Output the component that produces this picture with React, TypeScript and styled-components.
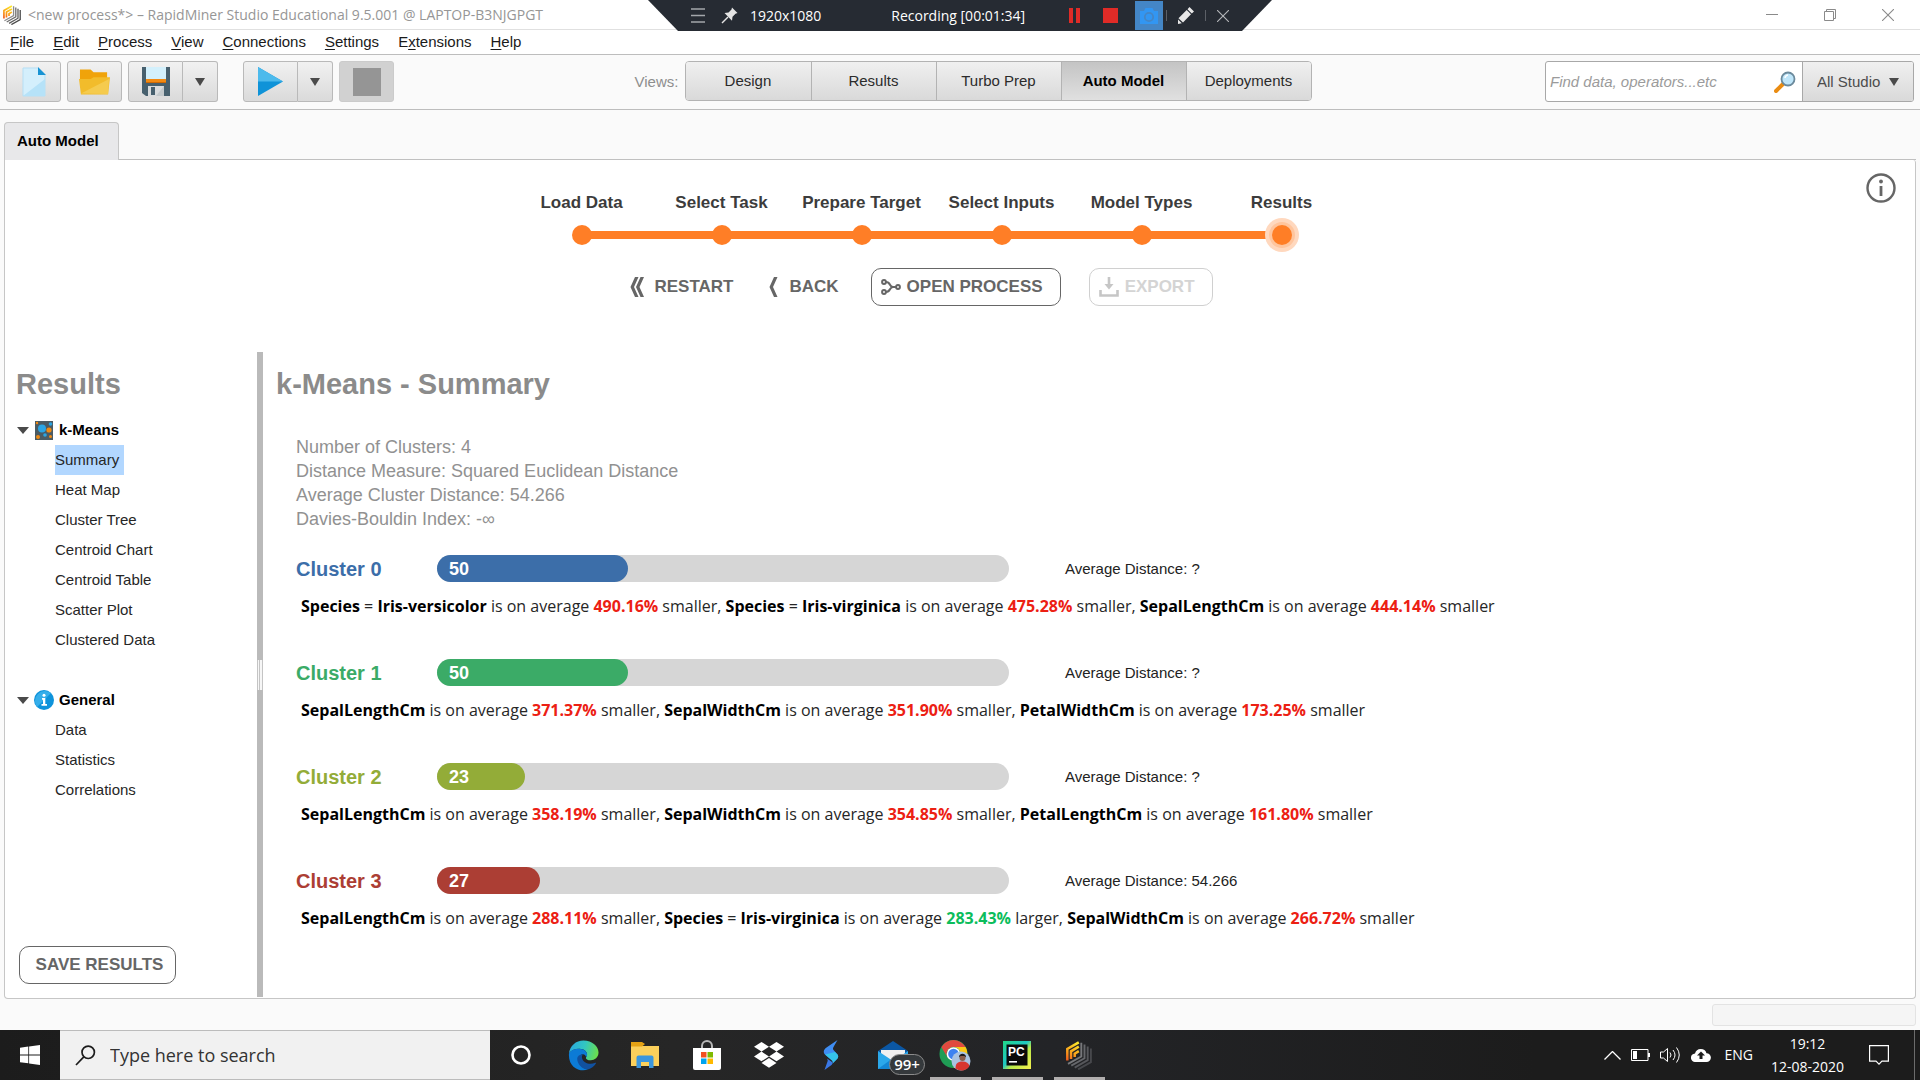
import React from "react";
import styled, { createGlobalStyle } from "styled-components";

const ARIAL = `"Liberation Sans", Arial, sans-serif`;
const SYSTEM = `"Open Sans", "Segoe UI", sans-serif`;

const GlobalStyle = createGlobalStyle`
  *, *::before, *::after { box-sizing: border-box; }
  body { margin: 0; background: #fafafa; }
  button, input, select { font: inherit; color: inherit; margin: 0; }
  h1, h2, h3, p, ul, dl, dd { margin: 0; padding: 0; }
  ul { list-style: none; }
  svg { display: block; flex: none; }
`;

const Page = styled.div`
  min-height: 100vh;
  display: flex;
  flex-direction: column;
  font-family: ${ARIAL};
  font-size: 15px;
  color: #222;
`;

/* ---------- window title ---------- */

const TitleBar = styled.header`
  position: relative;
  height: 30px;
  flex: none;
  display: flex;
  align-items: center;
  gap: 7px;
  padding-left: 3px;
  background: #fff;
  border-bottom: 1px solid #e0e0e0;
`;

const WindowTitle = styled.h1`
  flex: 1;
  font: 400 14px/20px ${SYSTEM};
  color: #969696;
  white-space: nowrap;
`;

const PlainButton = styled.button`
  display: flex;
  align-items: center;
  justify-content: center;
  padding: 0;
  border: 0;
  background: none;
`;

const WindowButton = styled(PlainButton)`
  width: 58px;
  height: 28px;
`;

const WindowButtons = styled.div`
  display: flex;
  padding-right: 3px;
`;

const Recorder = styled.div`
  position: absolute;
  top: 0;
  left: 50%;
  width: 624px;
  height: 31px;
  margin-left: -312px;
  padding: 0 43px;
  display: flex;
  align-items: center;
  background: #262b33;
  clip-path: polygon(0 0, 100% 0, 594px 100%, 30px 100%);
  font: 400 14px/20px ${SYSTEM};
  color: #fff;
`;

const RecorderSize = styled.span`
  margin-left: 12px;
`;

const RecorderTime = styled.span`
  flex: 1;
  padding-left: 26px;
  text-align: center;
`;

const RecorderTools = styled.div`
  display: flex;
  align-items: center;
  gap: 23px;
`;

const RecorderIcons = styled.div`
  display: flex;
  align-items: center;
  gap: 16px;
`;

const RecorderEnd = styled.div`
  display: flex;
  align-items: center;
  gap: 11px;
  margin-left: -20px;
`;

const CameraButton = styled(PlainButton)`
  width: 28px;
  height: 29px;
  margin-left: -6px;
  background: #4486c6;
`;

const Separator = styled.span`
  width: 1px;
  height: 11px;
  background: #5c6067;
`;

/* ---------- menu ---------- */

const MenuBar = styled.nav`
  height: 25px;
  flex: none;
  display: flex;
  align-items: center;
  gap: 19px;
  padding-left: 10px;
  background: #fff;
  border-bottom: 1px solid #bdbdbd;
`;

const MenuItem = styled(PlainButton)`
  display: block;
  line-height: 20px;
  color: #1a1a1a;
  u { text-underline-offset: 2px; }
`;

/* ---------- toolbar ---------- */

const Toolbar = styled.div`
  height: 55px;
  flex: none;
  display: flex;
  align-items: flex-start;
  justify-content: space-between;
  padding: 6px 6px 0;
  background: #fafafa;
  border-bottom: 1px solid #bdbdbd;
`;

const ToolGroup = styled.div`
  display: flex;
  gap: 6px;
`;

const SplitButton = styled.div`
  display: flex;
  & + & { margin-left: 19px; }
`;

const ToolButton = styled.button<{ $narrow?: boolean; $join?: "left" | "right" }>`
  width: ${(p) => (p.$narrow ? 35 : 55)}px;
  height: 41px;
  padding: 0;
  display: flex;
  align-items: center;
  justify-content: center;
  border: 1px solid #b9b9b9;
  border-left-width: ${(p) => (p.$join === "right" ? 0 : 1)}px;
  border-radius: ${(p) =>
    p.$join === "left" ? "3px 0 0 3px" : p.$join === "right" ? "0 3px 3px 0" : "3px"};
  background: linear-gradient(#f1f1f1, #dadada);
  &:disabled { background: #d1d1d1; border-color: #cbcbcb; }
`;

const Views = styled.div`
  display: flex;
  align-items: center;
  padding-left: 8px;
  gap: 7px;
  color: #8e8e8e;
`;

const ViewTabs = styled.div`
  display: flex;
  border: 1px solid #b3b3b3;
  border-radius: 4px;
  overflow: hidden;
`;

const ViewTab = styled.button<{ $active?: boolean }>`
  width: 125px;
  height: 38px;
  padding: 0 2px 2px 0;
  border: 0;
  border-left: 1px solid #b3b3b3;
  background: ${(p) =>
    p.$active ? "linear-gradient(#c4c4c4, #e0e0e0)" : "linear-gradient(#f0f0f0, #d9d9d9)"};
  font-weight: ${(p) => (p.$active ? 700 : 400)};
  color: ${(p) => (p.$active ? "#000" : "#2b2b2b")};
  &:first-child { border-left: 0; }
`;

const SearchBox = styled.div`
  display: flex;
  height: 41px;
  width: 369px;
  border: 1px solid #a8a8a8;
  border-radius: 3px;
  background: #fff;
  overflow: hidden;
`;

const SearchLabel = styled.label`
  flex: 1;
  min-width: 0;
  display: flex;
  align-items: center;
  padding: 0 6px 0 4px;
`;

const SearchInput = styled.input`
  flex: 1;
  min-width: 0;
  border: 0;
  padding: 0;
  background: none;
  outline: none;
  &::placeholder { color: #9b9b9b; font-style: italic; opacity: 1; }
`;

const ScopeBox = styled.div`
  width: 111px;
  display: flex;
  align-items: center;
  padding: 0 14px;
  border-left: 1px solid #a8a8a8;
  background: linear-gradient(#f0f0f0, #d9d9d9);
`;

const ScopeSelect = styled.select`
  flex: 1;
  min-width: 0;
  appearance: none;
  border: 0;
  padding: 0;
  background: none;
  color: #4c4c4c;
`;

/* ---------- auto model panel ---------- */

const TabStrip = styled.div`
  display: flex;
  flex: none;
  padding: 12px 4px 0;
`;

const PanelTab = styled.button`
  width: 115px;
  height: 38px;
  padding: 0 12px 2px;
  text-align: left;
  font-weight: 700;
  color: #000;
  border: 1px solid #c6c6c6;
  border-bottom: 0;
  border-radius: 4px 4px 0 0;
  background: #e8e8ea;
`;

const TabRest = styled.div`
  flex: 1;
  border-bottom: 1px solid #c0c0c0;
`;

const Panel = styled.main`
  flex: 1;
  display: flex;
  flex-direction: column;
  margin: 0 4px;
  background: #fff;
  border: 1px solid #c6c6c6;
  border-top: 0;
  border-radius: 0 3px 4px 4px;
`;

const PanelHead = styled.div`
  display: flex;
  height: 192px;
  flex: none;
`;

const Wizard = styled.div`
  flex: 1;
  display: flex;
  flex-direction: column;
  align-items: center;
  padding-top: 33px;
`;

const InfoButton = styled(PlainButton)`
  width: 30px;
  height: 30px;
  margin: 13px 19px 0 8px;
`;

const Steps = styled.ol`
  display: flex;
  margin: 0;
  padding: 0;
  list-style: none;
`;

const Step = styled.li`
  width: 140px;
  text-align: center;
  font: 700 17px/20px ${ARIAL};
  color: #3c3c3c;
`;

const Track = styled.div`
  height: 34px;
  margin-top: 5px;
  display: flex;
  align-items: center;
`;

const Segment = styled.span<{ $hidden?: boolean }>`
  flex: 1;
  height: 8px;
  background: ${(p) => (p.$hidden ? "transparent" : "#ff7e26")};
`;

const Dot = styled.span<{ $current?: boolean }>`
  width: 20px;
  height: 20px;
  margin: 0 -1px;
  border-radius: 50%;
  background: #ff7e26;
  box-shadow: ${(p) => (p.$current ? "0 0 0 3px #ffc59d, 0 0 0 7px #ffd8be" : "none")};
`;

const Actions = styled.div`
  display: flex;
  gap: 28px;
  margin-top: 16px;
  padding-right: 24px;
`;

const Action = styled.button<{ $outline?: boolean }>`
  height: 38px;
  display: flex;
  align-items: center;
  gap: ${(p) => (p.$outline ? 6 : 9)}px;
  padding: ${(p) => (p.$outline ? "0 17px 0 9px" : "0 4px")};
  border: ${(p) => (p.$outline ? "1px solid #666" : "0")};
  border-radius: 10px;
  background: none;
  font-weight: 700;
  font-size: 17px;
  color: #666;
  &:disabled { color: #d4d4d4; border-color: #d0d0d0; }
`;

const Workspace = styled.div`
  flex: 1;
  display: flex;
`;

const Sidebar = styled.aside`
  width: 252px;
  flex: none;
  display: flex;
  flex-direction: column;
  padding: 14px 0 14px 11px;
`;

const Heading = styled.h2`
  font: 700 29px/36px ${ARIAL};
  color: #8b8b8b;
`;

const Tree = styled.div`
  flex: 1;
  margin-top: 13px;
`;

const TreeGroup = styled.section`
  margin-bottom: 30px;
`;

const TreeHead = styled.h3`
  height: 30px;
  display: flex;
  align-items: center;
  gap: 5px;
  padding-left: 1px;
  font: 700 15px/30px ${ARIAL};
  color: #000;
`;

const TreeLink = styled.a<{ $selected?: boolean }>`
  display: table;
  margin-left: 39px;
  padding-right: 5px;
  line-height: 30px;
  text-decoration: none;
  color: #262626;
  background: ${(p) => (p.$selected ? "#b2d7ff" : "none")};
`;

const SaveButton = styled(Action)`
  align-self: flex-start;
  width: 157px;
  margin-left: 3px;
  padding: 0 0 0 4px;
  justify-content: center;
`;

const Splitter = styled.div`
  width: 6px;
  flex: none;
  display: flex;
  align-items: center;
  margin-bottom: 1px;
  background: #bababa;
`;

const Grip = styled.span`
  width: 6px;
  height: 30px;
  background: linear-gradient(90deg, #c4c4c4 1px, #f6f6f6 1px 2px, #c4c4c4 2px 3px, #f6f6f6 3px 5px, #c4c4c4 5px);
`;

const Content = styled.section`
  flex: 1;
  min-width: 0;
  padding: 14px 13px 0;
`;

const Facts = styled.ul`
  margin: 33px 20px 23px;
  font-size: 18px;
  line-height: 24px;
  color: #919191;
`;

const Cluster = styled.article`
  margin: 0 20px 41px;
`;

const ClusterRow = styled.div`
  height: 27px;
  display: grid;
  grid-template-columns: 141px 572px 1fr;
  align-items: center;
`;

const ClusterName = styled.h3<{ $color: string }>`
  padding-top: 2px;
  font: 700 20px/27px ${ARIAL};
  color: ${(p) => p.$color};
`;

const Meter = styled.div`
  height: 27px;
  border-radius: 14px;
  background: #d6d6d6;
`;

const MeterFill = styled.div<{ $color: string }>`
  height: 27px;
  padding: 1px 0 0 12px;
  border-radius: 14px;
  background: ${(p) => p.$color};
  font: 700 18px/27px ${ARIAL};
  color: #fff;
`;

const Distance = styled.span`
  margin-left: 56px;
`;

const Description = styled.p`
  margin: 14px 0 0 5px;
  font: 400 16px/22px "Open Sans", sans-serif;
  color: #262626;
  white-space: nowrap;
  b { color: #000; }
`;

const Percent = styled.strong<{ $up?: boolean }>`
  color: ${(p) => (p.$up ? "#0cbd5c" : "#ec2013")};
`;

const StatusBar = styled.footer`
  height: 31px;
  flex: none;
  display: flex;
  justify-content: flex-end;
  padding: 5px 4px 4px;
`;

const ProgressBox = styled.div`
  width: 204px;
  border: 1px solid #e3e3e3;
  border-radius: 3px;
  background: #f5f5f5;
`;

/* ---------- system task bar ---------- */

const TaskBar = styled.footer`
  height: 50px;
  flex: none;
  display: flex;
  background: linear-gradient(90deg, #1c1c1c, #262626 35%, #232427 55%, #1c1c1c 80%);
  font: 400 14px/20px ${SYSTEM};
  color: #fff;
`;

const StartButton = styled(PlainButton)`
  width: 60px;
`;

const TaskSearch = styled.label`
  width: 430px;
  display: flex;
  align-items: center;
  gap: 14px;
  padding-left: 15px;
  background: #f1f1f1;
  border: solid #bcbcbc;
  border-width: 1px 0;
`;

const TaskInput = styled.input`
  flex: 1;
  min-width: 0;
  border: 0;
  padding: 0;
  outline: none;
  background: none;
  font-size: 18px;
  line-height: 24px;
  &::placeholder { color: #333; opacity: 1; }
`;

const Apps = styled.div`
  flex: 1;
  display: flex;
`;

const AppButton = styled(PlainButton)<{ $open?: boolean }>`
  position: relative;
  width: 62px;
  height: 50px;
  background: ${(p) =>
    p.$open ? "linear-gradient(#b1aeae, #b1aeae) center bottom / 51px 3px no-repeat" : "none"};
`;

const Badge = styled.span`
  position: absolute;
  left: 27px;
  top: 24px;
  width: 36px;
  height: 21px;
  border: 1px solid #8c8c8c;
  border-radius: 11px;
  background: #35393c;
  font-size: 15px;
  font-weight: 600;
  line-height: 19px;
  text-align: center;
  color: #fff;
`;

const Tray = styled.div`
  display: flex;
  align-items: center;
`;

const TrayIcons = styled.div`
  display: flex;
  align-items: center;
  gap: 10px;
`;

const Language = styled(PlainButton)`
  margin: 0 16px 0 14px;
`;

const Clock = styled.div`
  width: 77px;
  display: flex;
  flex-direction: column;
  gap: 3px;
  text-align: center;
`;

const NoticeButton = styled(PlainButton)`
  margin: 0 25px 0 23px;
`;

const DesktopEdge = styled.span`
  width: 1px;
  height: 50px;
  margin-right: 5px;
  background: #6b6b6b;
`;

/* ---------- drawings ---------- */

const Caret = ({ w = 10, h = 8, fill = "#4a4a4a" }: { w?: number; h?: number; fill?: string }) => (
  <svg width={w} height={h} viewBox="0 0 10 8" preserveAspectRatio="none">
    <path d="M0 0h10L5 8z" fill={fill} />
  </svg>
);

const RapidLogo = ({ size, dark }: { size: number; dark?: boolean }) => {
  const greys = dark ? ["#77787b", "#66676b", "#56575b", "#47484c"] : ["#8c8c8c", "#6f6f6f", "#5c5c5c", "#4a4a4a"];
  const warm = dark ? "logoWarmDark" : "logoWarm";
  return (
    <svg width={size} height={Math.round(size * 1.12)} viewBox="0 0 26 29" fill="none">
      <defs>
        <linearGradient id={warm} gradientUnits="userSpaceOnUse" x1="2" y1="21" x2="12" y2="2">
          <stop offset="0" stopColor="#f0541e" />
          <stop offset="0.450" stopColor="#f9a01b" />
          <stop offset="1" stopColor="#fde92b" />
        </linearGradient>
      </defs>
      <g stroke={`url(#${warm})`} strokeWidth="2.500">
        <path d="M1.300 19.500V8L12.800 1.300" />
        <path d="M5 18V10.300l7.800-4.600" />
        <path d="M8.700 16v-3.400l4.100-2.400" />
      </g>
      <g strokeWidth="1.900">
        <path d="M15.300 1.800V15.500L2 22.800" stroke={greys[0]} />
        <path d="M18.500 3.600V17.300L5.300 24.700" stroke={greys[1]} />
        <path d="M21.700 5.500V19.200L8.700 26.600" stroke={greys[2]} />
        <path d="M24.900 7.400V21.100L12.100 28.400" stroke={greys[3]} />
      </g>
    </svg>
  );
};

const NewIcon = () => (
  <svg width="24" height="30" viewBox="0 0 24 30">
    <path d="M1 1h15l7 7v21H1z" fill="#d4effc" stroke="#b5dff5" />
    <path d="M1 29L23 12v17z" fill="#b6e2f8" />
    <path d="M16 0l8 8h-8z" fill="#1893d3" />
  </svg>
);

const OpenIcon = () => (
  <svg width="31" height="27" viewBox="0 0 32 27">
    <path d="M1 1h11l3 3h14v8H1z" fill="#f0a30a" />
    <path d="M0 11l12 0 3-2h17l-2 18H2z" fill="#f2bc2b" />
    <path d="M2 26L31 11l-1 15.500z" fill="#f5cb4e" />
  </svg>
);

const SaveIcon = () => (
  <svg width="28" height="29" viewBox="0 0 28 29">
    <path d="M0 0h28v29H4l-4-3z" fill="#47606e" />
    <path d="M4 0h20v12H4z" fill="#d3f0fc" />
    <path d="M4 12h20v3H4z" fill="#f28a12" />
    <path d="M4 15h20v1H4z" fill="#cf6a05" />
    <path d="M6 19h16v10H6z" fill="#d9dcde" />
    <path d="M9 20h4v8H9z" fill="#47606e" />
    <path d="M22 19v10h-8z" fill="#c3c9cc" />
  </svg>
);

const PlayIcon = () => (
  <svg width="25" height="29" viewBox="0 0 25 29">
    <path d="M0 0l25 14.500L0 29z" fill="#0f93d8" />
    <path d="M0 0l25 14.500H0z" fill="#4cbaec" />
  </svg>
);

const MagnifierIcon = () => (
  <svg width="22" height="22" viewBox="0 0 22 22">
    <path d="M9 13l-7 7" stroke="#ea8c12" strokeWidth="4" strokeLinecap="round" />
    <circle cx="14" cy="8" r="6.500" fill="#bfe6fa" stroke="#6b8a9c" strokeWidth="1.800" />
    <path d="M11 7a3.500 3.500 0 0 1 3-3" stroke="#fff" strokeWidth="1.500" fill="none" />
  </svg>
);

const InfoIcon = () => (
  <svg width="30" height="30" viewBox="0 0 30 30" fill="none">
    <circle cx="15" cy="15" r="13.500" stroke="#666" strokeWidth="2.400" />
    <path d="M15 13v10" stroke="#666" strokeWidth="2.800" />
    <circle cx="15" cy="8.500" r="1.900" fill="#666" />
  </svg>
);

const ChevronPath = "M7 0h3.500L6 10l4.500 10H7L2.500 10z";
const RestartIcon = () => (
  <svg width="15" height="20" viewBox="2 0 15 20" fill="#666">
    <path d={ChevronPath} />
    <path d={ChevronPath} transform="translate(5.500 0)" />
  </svg>
);
const BackIcon = () => (
  <svg width="11" height="20" viewBox="2 0 11 20" fill="#666">
    <path d={ChevronPath} />
  </svg>
);

const ProcessIcon = () => (
  <svg width="20" height="16" viewBox="0 0 20 16" fill="none" stroke="#666" strokeWidth="2">
    <circle cx="3" cy="3" r="1.900" />
    <circle cx="3" cy="13" r="1.900" />
    <circle cx="17" cy="8" r="1.900" />
    <path d="M5 3c5 0 3 5 7 5h3M5 13c5 0 3-5 7-5" />
  </svg>
);

const ExportIcon = () => (
  <svg width="20" height="20" viewBox="0 0 20 20" fill="none" stroke="#c6c6c6" strokeWidth="2.600">
    <path d="M1.500 13v5.500h17V13" />
    <path d="M10 0v9" />
    <path d="M5.500 7h9L10 12.500z" fill="#c6c6c6" stroke="none" />
  </svg>
);

const KMeansIcon = () => (
  <svg width="20" height="19" viewBox="-1 0 20 19">
    <path d="M0 0h18v19H0z" fill="#4b5b63" />
    <circle cx="7" cy="7.500" r="4" fill="#2ba5e4" />
    <circle cx="14" cy="9" r="2.600" fill="#f08b13" />
    <circle cx="10" cy="14" r="1.800" fill="#2ba5e4" />
    <circle cx="3" cy="16" r="2" fill="#f08b13" />
    <circle cx="15.500" cy="3" r="1.800" fill="#2ba5e4" />
    <circle cx="2" cy="2" r="1.200" fill="#f08b13" />
    <circle cx="15.500" cy="15.500" r="1.500" fill="#f08b13" />
  </svg>
);

const GeneralIcon = () => (
  <svg width="20" height="20" viewBox="0 0 20 20">
    <circle cx="10" cy="10" r="10" fill="#0e93db" />
    <path d="M3 17A10 10 0 0 1 17 3z" fill="#35aeea" />
    <path d="M8 8h3.300v6H13v1.700H7.500V14H9V9.700H8z" fill="#fff" />
    <circle cx="10" cy="5.300" r="1.500" fill="#fff" />
  </svg>
);

const WindowsIcon = () => (
  <svg width="20" height="20" viewBox="0 0 20 20" fill="#fff">
    <path d="M0 2.800l8.300-1.200v7.900H0zM9.100 1.500L20 0v9.500H9.100zM0 10.400h8.300v7.900L0 17.200zM9.100 10.400H20V20L9.100 18.500z" />
  </svg>
);

const TaskSearchIcon = () => (
  <svg width="21" height="21" viewBox="0 0 21 21" fill="none" stroke="#1c1c1c" strokeWidth="1.700">
    <circle cx="13.200" cy="7.300" r="6.200" />
    <path d="M8.800 11.900L1 20" />
  </svg>
);

const EdgeIcon = () => (
  <svg width="31" height="31" viewBox="0 0 32 32">
    <defs>
      <linearGradient id="edgeTop" x1="0" y1="0.300" x2="1" y2="0.500">
        <stop offset="0" stopColor="#29a8e0" />
        <stop offset="0.500" stopColor="#32c6c2" />
        <stop offset="1" stopColor="#6be04c" />
      </linearGradient>
    </defs>
    <path d="M1 14C2 6 8 .500 16 .500c9 0 15.500 6 15.500 12.500 0 5-4 8-8 8-3.500 0-5-1.500-5-2.500 0-.800 1.200-1.200 1.200-3.500 0-3-3-6-8-6C6.500 9 3 11 1 14z" fill="url(#edgeTop)" />
    <path d="M1 14c2.500-4 6-5 10.500-5 5 0 8.200 3 8.200 6 0 1.500-.500 2.200-.900 2.800C18 15 16 14 14 15c-3 1.500-4 5-2 9 1.700 3.500 5 5.500 8.500 6.500C12 33.500 0 28 1 14z" fill="#0c7bd6" />
    <path d="M9.500 19c0 6 5 11 11 11.500 3.500-1 6.500-3.300 8.300-6.200.300-.600-.200-1-.800-.700-5 2.200-12.500.500-13.500-5-.300-1.500 0-2.800 1-4C12 15 9.500 16.500 9.500 19z" fill="#11519f" />
  </svg>
);

const ExplorerIcon = () => (
  <svg width="28" height="28" viewBox="0 0 28 28">
    <path d="M0 5h28v20H0z" fill="#fbd05b" />
    <path d="M0 1h11l3 2-3 2.500H0z" fill="#e5a214" />
    <path d="M5.500 27v-10.500a2 2 0 0 1 2-2h13a2 2 0 0 1 2 2V27H18v-6h-8v6z" fill="#3b96dd" />
  </svg>
);

const StoreIcon = () => (
  <svg width="28" height="30" viewBox="0 0 28 30">
    <path d="M9 10V6a5 5 0 0 1 10 0v4" fill="none" stroke="#b8b8b8" strokeWidth="2" />
    <path d="M0 8h28v20a2 2 0 0 1-2 2H2a2 2 0 0 1-2-2z" fill="#fff" />
    <path d="M8 12h5.500v5.500H8z" fill="#f25022" />
    <path d="M14.500 12H20v5.500h-5.500z" fill="#7fba00" />
    <path d="M8 18.500h5.500V24H8z" fill="#00a4ef" />
    <path d="M14.500 18.500H20V24h-5.500z" fill="#ffb900" />
  </svg>
);

const DropboxIcon = () => (
  <svg width="30" height="26" viewBox="0 0 30 26" fill="#fff">
    <path d="M7.500 0L15 4.800 7.500 9.600 0 4.800zM22.500 0L30 4.800l-7.500 4.800L15 4.800zM7.500 9.600L15 14.400l-7.500 4.800L0 14.400zM22.500 9.600L30 14.400l-7.500 4.800-7.500-4.800zM7.500 20.900L15 16.100l7.500 4.800L15 25.700z" />
  </svg>
);

const SwiftIcon = () => (
  <svg width="16" height="30" viewBox="0 0 16 30">
    <path d="M14.500 0L3.500 7.500C.500 9.500 0 12.500 2 14.500l7 6c1 1 1 2 .500 3L14 19c1.500-1.500 1.500-3 .500-4.500L10.500 10c-.800-1-.500-2 0-3z" fill="#3f8df2" />
    <path d="M2 14.500l7 6c1 1 1 2 .500 3L14 19c1.500-1.500 1.500-3 .500-4.500L12 12z" fill="#35c3ea" />
    <path d="M1.500 30l3-8.500c.500-1.200 0-2-.500-3l5 3.500c1 1 .500 2-.500 3z" fill="#3a78e6" />
  </svg>
);

const MailIcon = () => (
  <svg width="30" height="28" viewBox="0 0 30 28">
    <path d="M0 10L15 0l15 10v3H0z" fill="#0b57a4" />
    <path d="M3 9h24v12H3z" fill="#f0f0f0" />
    <path d="M0 10l15 10L30 10v18H0z" fill="#2ba8ea" />
    <path d="M0 28l15-11 15 11z" fill="#1487d4" />
  </svg>
);

const ChromeIcon = () => (
  <svg width="32" height="32" viewBox="0 0 32 32">
    <circle cx="14.500" cy="15" r="14" fill="#1f9d55" />
    <path d="M2.400 8A14 14 0 0 1 26.600 8H14.500a7 7 0 0 0-6 10.500z" fill="#e04a3f" />
    <path d="M26.600 8A14 14 0 0 1 14.500 29l6-10.500A7 7 0 0 0 14.500 8z" fill="#fbc816" />
    <circle cx="14.500" cy="15" r="6.800" fill="#fff" />
    <circle cx="14.500" cy="15" r="5.300" fill="#3e82f1" />
    <circle cx="22" cy="22" r="9.500" fill="#a9c3e2" />
    <path d="M16.500 29.500c0-5 2-7 7-7 4 0 6 1.500 7 4.500a9.500 9.500 0 0 1-14 2.500z" fill="#d8352f" />
    <circle cx="23.500" cy="19" r="3" fill="#8a5d4a" />
    <path d="M20 18.500c-.500-5 7.500-5 7 0l-1.500-1.500h-4z" fill="#1d1a1c" />
  </svg>
);

const PyCharmIcon = () => (
  <svg width="28" height="28" viewBox="0 0 28 28">
    <defs>
      <linearGradient id="pc" x1="0" y1="0" x2="1" y2="1">
        <stop offset="0" stopColor="#21d789" />
        <stop offset="0.450" stopColor="#1fc8c4" />
        <stop offset="0.600" stopColor="#b8ea4a" />
        <stop offset="1" stopColor="#f6f04f" />
      </linearGradient>
    </defs>
    <path d="M0 0h28v28H0z" fill="url(#pc)" />
    <path d="M3.500 3.500h21v21h-21z" fill="#0a0a0a" />
    <text x="5" y="15" fontFamily="Liberation Sans" fontWeight="700" fontSize="12" fill="#fff">PC</text>
    <path d="M6 20h8v1.600H6z" fill="#fff" />
  </svg>
);

const BatteryIcon = () => (
  <svg width="19" height="12" viewBox="0 0 19 12">
    <path d="M.500 .500h16.500v11H.500z" fill="none" stroke="#fff" />
    <path d="M2 2h4v8H2zM17 4h2v4h-2z" fill="#fff" />
  </svg>
);

const VolumeIcon = () => (
  <svg width="21" height="18" viewBox="0 0 21 18" fill="none" stroke="#fff">
    <path d="M.500 6h3L7.500 2.500v13L3.500 12h-3z" />
    <path d="M10 6.500q2 2.500 0 5M13 4q4 5 0 10M16.500 1.500q5.500 7.500 0 15" />
  </svg>
);

const CloudIcon = () => (
  <svg width="20" height="14" viewBox="0 0 20 14">
    <path d="M4.500 14a4.300 4.300 0 0 1-.500-8.600A6 6 0 0 1 15.500 5.200 4.400 4.400 0 0 1 15.500 14z" fill="#fff" />
    <path d="M10 3.500l4 4h-2.500V11h-3V7.500H6z" fill="#1c1c1c" />
  </svg>
);

const NoticeIcon = () => (
  <svg width="20" height="20" viewBox="0 0 20 20" fill="none" stroke="#fff" strokeWidth="1.200">
    <path d="M.600 .600h18.800v15.500H13l-3 3-3-3H.600z" />
  </svg>
);

const PinIcon = () => (
  <svg width="17" height="17" viewBox="0 0 17 17">
    <path d="M1 16l6-6" stroke="#e4e4e4" strokeWidth="1.500" />
    <path d="M11 .500L16.500 6l-2 .700-3 3-.500 4L3.500 6l4-.500 3-3z" fill="#e4e4e4" />
  </svg>
);

const PencilIcon = () => (
  <svg width="16" height="17" viewBox="0 0 16 17" fill="#e8e8e8">
    <path d="M11.500 0L16 4.500 13.800 6.500 9.500 2.200zM8.700 3l4.300 4.300L5 15.500.500 11.200zM0 12.500L3.800 16.200 0 17z" />
  </svg>
);

const CrossIcon = ({ size, color }: { size: number; color: string }) => (
  <svg width={size} height={size} viewBox="0 0 12 12" stroke={color} strokeWidth="1.100">
    <path d="M0 0l12 12M12 0L0 12" />
  </svg>
);

/* ---------- data ---------- */

const menus: [string, string, string][] = [
  ["", "F", "ile"],
  ["", "E", "dit"],
  ["", "P", "rocess"],
  ["", "V", "iew"],
  ["", "C", "onnections"],
  ["", "S", "ettings"],
  ["E", "x", "tensions"],
  ["", "H", "elp"],
];

const views = ["Design", "Results", "Turbo Prep", "Auto Model", "Deployments"];
const steps = ["Load Data", "Select Task", "Prepare Target", "Select Inputs", "Model Types", "Results"];
const modelPages = ["Summary", "Heat Map", "Cluster Tree", "Centroid Chart", "Centroid Table", "Scatter Plot", "Clustered Data"];
const generalPages = ["Data", "Statistics", "Correlations"];

interface Finding {
  attribute: string;
  value?: string;
  percent: string;
  larger?: boolean;
}

interface ClusterInfo {
  color: string;
  size: number;
  distance: string;
  findings: Finding[];
}

const clusters: ClusterInfo[] = [
  {
    color: "#3c6ea9",
    size: 50,
    distance: "?",
    findings: [
      { attribute: "Species", value: "Iris-versicolor", percent: "490.16%" },
      { attribute: "Species", value: "Iris-virginica", percent: "475.28%" },
      { attribute: "SepalLengthCm", percent: "444.14%" },
    ],
  },
  {
    color: "#3bab67",
    size: 50,
    distance: "?",
    findings: [
      { attribute: "SepalLengthCm", percent: "371.37%" },
      { attribute: "SepalWidthCm", percent: "351.90%" },
      { attribute: "PetalWidthCm", percent: "173.25%" },
    ],
  },
  {
    color: "#93ac38",
    size: 23,
    distance: "?",
    findings: [
      { attribute: "SepalLengthCm", percent: "358.19%" },
      { attribute: "SepalWidthCm", percent: "354.85%" },
      { attribute: "PetalLengthCm", percent: "161.80%" },
    ],
  },
  {
    color: "#ac3e34",
    size: 27,
    distance: "54.266",
    findings: [
      { attribute: "SepalLengthCm", percent: "288.11%" },
      { attribute: "Species", value: "Iris-virginica", percent: "283.43%", larger: true },
      { attribute: "SepalWidthCm", percent: "266.72%" },
    ],
  },
];

const total = clusters.reduce((sum, c) => sum + c.size, 0);

const FindingText = ({ item, last }: { item: Finding; last: boolean }) => (
  <>
    <b>{item.attribute}</b>
    {item.value && (
      <>
        {" = "}
        <b>{item.value}</b>
      </>
    )}
    {" is on average "}
    <Percent $up={item.larger}>{item.percent}</Percent>
    {item.larger ? " larger" : " smaller"}
    {last ? "" : ", "}
  </>
);

export default function App() {
  return (
    <Page>
      <GlobalStyle />
      <TitleBar>
        <RapidLogo size={18} />
        <WindowTitle>&lt;new process*&gt; – RapidMiner Studio Educational 9.5.001 @ LAPTOP-B3NJGPGT</WindowTitle>
        <WindowButtons>
          <WindowButton aria-label="Minimize">
            <svg width="12" height="12" viewBox="0 0 12 12"><path d="M0 5.500h12" stroke="#8a8a8a" /></svg>
          </WindowButton>
          <WindowButton aria-label="Restore">
            <svg width="12" height="12" viewBox="0 0 12 12" fill="none" stroke="#8a8a8a">
              <path d="M.500 2.500h9v9h-9zM2.500 2.500v-2h9v9h-2" />
            </svg>
          </WindowButton>
          <WindowButton aria-label="Close"><CrossIcon size={12} color="#8a8a8a" /></WindowButton>
        </WindowButtons>
        <Recorder>
          <RecorderIcons>
            <PlainButton aria-label="Recorder menu">
              <svg width="14" height="15" viewBox="0 0 14 15"><path d="M0 1h14M0 7.500h14M0 14h14" stroke="#a3a6ab" strokeWidth="1.500" /></svg>
            </PlainButton>
            <PlainButton aria-label="Pin"><PinIcon /></PlainButton>
          </RecorderIcons>
          <RecorderSize>1920x1080</RecorderSize>
          <RecorderTime>Recording [00:01:34]</RecorderTime>
          <RecorderTools>
            <PlainButton aria-label="Pause">
              <svg width="11" height="15" viewBox="0 0 11 15"><path d="M0 0h4v15H0zM7 0h4v15H7z" fill="#e02b27" /></svg>
            </PlainButton>
            <PlainButton aria-label="Stop recording">
              <svg width="15" height="15" viewBox="0 0 15 15"><path d="M0 0h15v15H0z" fill="#e02b27" /></svg>
            </PlainButton>
            <CameraButton aria-label="Take screenshot">
              <svg width="18" height="16" viewBox="0 0 18 16">
                <path d="M0 3h4l1.500-3h7L14 3h4v13H0z" fill="#3296f2" />
                <circle cx="9" cy="9" r="4.200" fill="none" stroke="#4486c6" strokeWidth="1.800" />
              </svg>
            </CameraButton>
            <RecorderEnd>
              <Separator />
              <PlainButton aria-label="Draw"><PencilIcon /></PlainButton>
              <Separator />
              <PlainButton aria-label="Close recorder"><CrossIcon size={12} color="#b5b7ba" /></PlainButton>
            </RecorderEnd>
          </RecorderTools>
        </Recorder>
      </TitleBar>

      <MenuBar>
        {menus.map(([before, key, after]) => (
          <MenuItem key={key + after}>
            {before}<u>{key}</u>{after}
          </MenuItem>
        ))}
      </MenuBar>

      <Toolbar>
        <ToolGroup>
          <ToolButton aria-label="New process"><NewIcon /></ToolButton>
          <ToolButton aria-label="Open process"><OpenIcon /></ToolButton>
          <SplitButton>
            <ToolButton aria-label="Save process" $join="left"><SaveIcon /></ToolButton>
            <ToolButton aria-label="Save options" $narrow $join="right"><Caret /></ToolButton>
          </SplitButton>
          <SplitButton>
            <ToolButton aria-label="Run" $join="left"><PlayIcon /></ToolButton>
            <ToolButton aria-label="Run options" $narrow $join="right"><Caret /></ToolButton>
          </SplitButton>
          <ToolButton aria-label="Stop" disabled>
            <svg width="28" height="28" viewBox="0 0 28 28"><path d="M0 0h28v28H0z" fill="#959595" /></svg>
          </ToolButton>
        </ToolGroup>
        <Views>
          Views:
          <ViewTabs>
            {views.map((v) => (
              <ViewTab key={v} $active={v === "Auto Model"}>{v}</ViewTab>
            ))}
          </ViewTabs>
        </Views>
        <SearchBox>
          <SearchLabel>
            <SearchInput type="text" aria-label="Search" placeholder="Find data, operators...etc" />
            <MagnifierIcon />
          </SearchLabel>
          <ScopeBox>
            <ScopeSelect aria-label="Search scope">
              <option>All Studio</option>
            </ScopeSelect>
            <Caret />
          </ScopeBox>
        </SearchBox>
      </Toolbar>

      <TabStrip>
        <PanelTab>Auto Model</PanelTab>
        <TabRest />
      </TabStrip>

      <Panel>
        <PanelHead>
          <Wizard>
            <Steps>
              {steps.map((s, i) => (
                <Step key={s}>
                  {s}
                  <Track>
                    <Segment $hidden={i === 0} />
                    <Dot $current={i === steps.length - 1} />
                    <Segment $hidden={i === steps.length - 1} />
                  </Track>
                </Step>
              ))}
            </Steps>
            <Actions>
              <Action><RestartIcon />RESTART</Action>
              <Action><BackIcon />BACK</Action>
              <Action $outline><ProcessIcon />OPEN PROCESS</Action>
              <Action $outline disabled><ExportIcon />EXPORT</Action>
            </Actions>
          </Wizard>
          <InfoButton aria-label="Information"><InfoIcon /></InfoButton>
        </PanelHead>

        <Workspace>
          <Sidebar>
            <Heading>Results</Heading>
            <Tree>
              <TreeGroup>
                <TreeHead><Caret w={12} h={7} /><KMeansIcon />k-Means</TreeHead>
                {modelPages.map((p) => (
                  <TreeLink key={p} href="#" $selected={p === "Summary"}>{p}</TreeLink>
                ))}
              </TreeGroup>
              <TreeGroup>
                <TreeHead><Caret w={12} h={7} /><GeneralIcon />General</TreeHead>
                {generalPages.map((p) => (
                  <TreeLink key={p} href="#">{p}</TreeLink>
                ))}
              </TreeGroup>
            </Tree>
            <SaveButton $outline>SAVE RESULTS</SaveButton>
          </Sidebar>
          <Splitter><Grip /></Splitter>
          <Content>
            <Heading>k-Means - Summary</Heading>
            <Facts>
              <li>Number of Clusters: 4</li>
              <li>Distance Measure: Squared Euclidean Distance</li>
              <li>Average Cluster Distance: 54.266</li>
              <li>Davies-Bouldin Index: -∞</li>
            </Facts>
            {clusters.map((c, i) => (
              <Cluster key={i}>
                <ClusterRow>
                  <ClusterName $color={c.color}>Cluster {i}</ClusterName>
                  <Meter>
                    <MeterFill $color={c.color} style={{ width: `${(c.size / total) * 100}%` }}>{c.size}</MeterFill>
                  </Meter>
                  <Distance>Average Distance: {c.distance}</Distance>
                </ClusterRow>
                <Description>
                  {c.findings.map((f, n) => (
                    <FindingText key={n} item={f} last={n === c.findings.length - 1} />
                  ))}
                </Description>
              </Cluster>
            ))}
          </Content>
        </Workspace>
      </Panel>

      <StatusBar><ProgressBox /></StatusBar>

      <TaskBar>
        <StartButton aria-label="Start"><WindowsIcon /></StartButton>
        <TaskSearch>
          <TaskSearchIcon />
          <TaskInput type="text" aria-label="Search the computer" placeholder="Type here to search" />
        </TaskSearch>
        <Apps>
          <AppButton aria-label="Cortana">
            <svg width="20" height="20" viewBox="0 0 20 20"><circle cx="10" cy="10" r="8.500" fill="none" stroke="#fff" strokeWidth="2.600" /></svg>
          </AppButton>
          <AppButton aria-label="Edge"><EdgeIcon /></AppButton>
          <AppButton aria-label="File Explorer"><ExplorerIcon /></AppButton>
          <AppButton aria-label="Store"><StoreIcon /></AppButton>
          <AppButton aria-label="Dropbox"><DropboxIcon /></AppButton>
          <AppButton aria-label="Editor"><SwiftIcon /></AppButton>
          <AppButton aria-label="Mail"><MailIcon /><Badge>99+</Badge></AppButton>
          <AppButton aria-label="Chrome" $open><ChromeIcon /></AppButton>
          <AppButton aria-label="PyCharm" $open><PyCharmIcon /></AppButton>
          <AppButton aria-label="RapidMiner" $open><RapidLogo size={26} dark /></AppButton>
        </Apps>
        <Tray>
          <TrayIcons>
            <PlainButton aria-label="Hidden icons">
              <svg width="17" height="9" viewBox="0 0 17 9"><path d="M.500 8.500l8-8 8 8" fill="none" stroke="#fff" strokeWidth="1.300" /></svg>
            </PlainButton>
            <BatteryIcon />
            <VolumeIcon />
            <CloudIcon />
          </TrayIcons>
          <Language>ENG</Language>
          <Clock>
            <time>19:12</time>
            <time>12-08-2020</time>
          </Clock>
          <NoticeButton aria-label="Notifications"><NoticeIcon /></NoticeButton>
          <DesktopEdge />
        </Tray>
      </TaskBar>
    </Page>
  );
}
